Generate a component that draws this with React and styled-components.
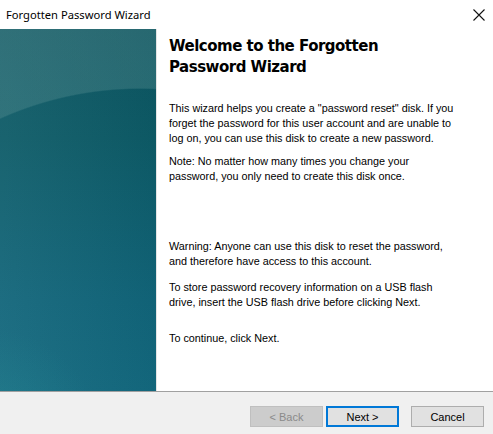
import React from "react";
import styled, { createGlobalStyle } from "styled-components";

const GlobalStyle = createGlobalStyle`
  html, body {
    margin: 0;
    padding: 0;
    background: #ffffff;
  }
`;

const Window = styled.div`
  width: 493px;
  height: 434px;
  display: flex;
  flex-direction: column;
  background: #ffffff;
  overflow: hidden;
  font-family: "Liberation Sans", Arial, sans-serif;
`;

const TitleBar = styled.div`
  height: 29px;
  display: flex;
  align-items: center;
  justify-content: space-between;
  padding: 0 7px 0 6px;
  box-sizing: border-box;
  background: #ffffff;
`;

const Title = styled.span`
  font: 11.2px "Noto Sans", "Liberation Sans", sans-serif;
  color: #000000;
  margin-top: -1px;
`;

const CloseButton = styled.div`
  width: 14px;
  height: 14px;
  display: flex;
  align-items: center;
  justify-content: center;
`;

const Main = styled.div`
  flex: 0 0 362px;
  display: flex;
`;

const SidePanel = styled.div`
  width: 156px;
  flex: 0 0 156px;
  border-right: 1px solid #e4e4e4;
  background:
    radial-gradient(circle 342px at 140px 401px, rgba(255, 255, 255, 0) 99.6%, rgba(110, 160, 160, 0.28) 100%),
    radial-gradient(circle 110px at -10px 410px, rgba(40, 150, 155, 0.3) 0%, rgba(40, 150, 155, 0) 100%),
    linear-gradient(to right, rgba(255, 255, 255, 0.05), rgba(0, 0, 0, 0.03)),
    linear-gradient(to bottom, #0c5561 0%, #0d5b67 30%, #11657a 75%, #13697f 100%);
`;

const Content = styled.div`
  flex: 1;
  padding: 7px 10px 0 12px;
  color: #000000;
  white-space: nowrap;
`;

const Heading = styled.h1`
  margin: 0 0 23px 0;
  font: bold 15px "DejaVu Sans", Verdana, sans-serif;
  line-height: 21px;
  letter-spacing: -0.5px;
  color: #000000;
`;

const Paragraph = styled.p`
  margin: 0 0 ${({ gap }) => gap}px 0;
  font: 10.8px "Liberation Sans", Arial, sans-serif;
  line-height: 15px;
`;

const Separator = styled.div`
  height: 1px;
  background: #a0a0a0;
`;

const Footer = styled.div`
  flex: 1;
  background: #f0f0f0;
  display: flex;
  justify-content: flex-end;
  align-items: flex-start;
  padding: 14px 9px 0 0;
`;

const Button = styled.button`
  width: 73px;
  height: 21px;
  margin-left: ${({ gap }) => gap}px;
  box-sizing: border-box;
  padding: 0;
  font: 11px "Liberation Sans", Arial, sans-serif;
  color: ${({ disabled }) => (disabled ? "#8a8a8a" : "#000000")};
  background: ${({ disabled }) => (disabled ? "#cccccc" : "#e1e1e1")};
  border: ${({ primary, disabled }) =>
    primary ? "2px solid #0078d7" : disabled ? "1px solid #bfbfbf" : "1px solid #adadad"};
  border-radius: 0;
`;

const App = () => {
  return (
    <>
      <GlobalStyle />
      <Window>
        <TitleBar>
          <Title>Forgotten Password Wizard</Title>
          <CloseButton>
            <svg width="12" height="12" viewBox="0 0 12 12">
              <path d="M0.5 0.5 L11.5 11.5 M11.5 0.5 L0.5 11.5" stroke="#111" strokeWidth="1.1" />
            </svg>
          </CloseButton>
        </TitleBar>
        <Main>
          <SidePanel />
          <Content>
            <Heading>
              Welcome to the Forgotten
              <br />
              Password Wizard
            </Heading>
            <Paragraph gap={8}>
              This wizard helps you create a "password reset" disk. If you
              <br />
              forget the password for this user account and are unable to
              <br />
              log on, you can use this disk to create a new password.
            </Paragraph>
            <Paragraph gap={55}>
              Note: No matter how many times you change your
              <br />
              password, you only need to create this disk once.
            </Paragraph>
            <Paragraph gap={11}>
              Warning: Anyone can use this disk to reset the password,
              <br />
              and therefore have access to this account.
            </Paragraph>
            <Paragraph gap={21}>
              To store password recovery information on a USB flash
              <br />
              drive, insert the USB flash drive before clicking Next.
            </Paragraph>
            <Paragraph gap={0}>To continue, click Next.</Paragraph>
          </Content>
        </Main>
        <Separator />
        <Footer>
          <Button disabled gap={0}>&lt; Back</Button>
          <Button primary gap={3}>Next &gt;</Button>
          <Button gap={12}>Cancel</Button>
        </Footer>
      </Window>
    </>
  );
};

export default App;
